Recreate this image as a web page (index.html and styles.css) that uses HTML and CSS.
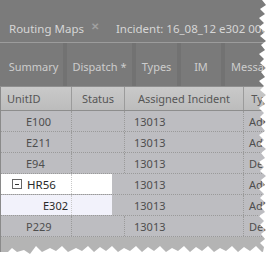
FILE: index.html
```html
<!DOCTYPE html>
<html lang="en">
<head>
  <meta charset="UTF-8" />
  <title>Routing Maps</title>
  <link rel="stylesheet" href="styles.css">
</head>
<body>
  <div class="page">
    <div class="titlebar">
      <span class="doc-tab">Routing Maps</span>
      <span class="close">&#x2715;</span>
      <span class="doc-tab">Incident: 16_08_12 e302 0001 1</span>
    </div>

    <div class="tabbar">
      <span class="tab t1">Summary</span>
      <span class="tab t2">Dispatch *</span>
      <span class="tab t3">Types</span>
      <span class="tab t4">IM</span>
      <span class="tab t5">Message</span>
    </div>

    <div class="grid-wrap">
      <div class="side"></div>
      <div class="grid">
        <div class="row head">
          <div class="cell c1">UnitID</div>
          <div class="cell c2">Status</div>
          <div class="cell c3">Assigned Incident</div>
          <div class="cell c4">Type</div>
        </div>
        <div class="row">
          <div class="cell c1 unit">E100</div>
          <div class="cell c2"></div>
          <div class="cell c3">13013</div>
          <div class="cell c4">Adhoc</div>
        </div>
        <div class="row">
          <div class="cell c1 unit">E211</div>
          <div class="cell c2"></div>
          <div class="cell c3">13013</div>
          <div class="cell c4">Ad-hoc</div>
        </div>
        <div class="row">
          <div class="cell c1 unit">E94</div>
          <div class="cell c2"></div>
          <div class="cell c3">13013</div>
          <div class="cell c4">Default</div>
        </div>
        <div class="row">
          <div class="cell c1 lit group"><span class="toggle"></span>HR56</div>
          <div class="cell c2 lit"></div>
          <div class="cell c3">13013</div>
          <div class="cell c4">Adhoc</div>
        </div>
        <div class="row">
          <div class="cell c1 lit sub">E302</div>
          <div class="cell c2 lit sub"></div>
          <div class="cell c3">13013</div>
          <div class="cell c4">Adhoc</div>
        </div>
        <div class="row">
          <div class="cell c1 unit">P229</div>
          <div class="cell c2"></div>
          <div class="cell c3">13013</div>
          <div class="cell c4">Default</div>
        </div>
      </div>
    </div>

    <svg class="torn" width="270" height="257" viewBox="0 0 270 257">
      <polygon fill="#fff" points="270,0 262,0 266,5 260,9 265,14 259,18 264,23 259,27 265,32 260,36 266,41 261,45 265,50 259,54 264,59 260,63 266,68 261,72 265,77 259,81 264,86 260,90 266,95 261,99 265,104 259,108 264,113 260,117 266,122 261,126 265,131 259,135 264,140 260,144 266,149 261,153 265,158 259,162 264,167 260,171 266,176 261,180 265,185 259,189 264,194 260,198 266,203 261,207 265,212 259,216 264,221 260,225 266,230 261,234 265,239 260,243 264,247 262,257 270,257"/>
      <polygon fill="#fff" points="0,257 0,252 8,252 12,248 17,252 24,250 30,254 36,246 42,252 50,248 56,251 62,246 68,252 76,248 82,251 88,246 94,252 100,247 106,251 112,246 118,252 124,248 130,251 136,246 142,252 148,247 154,251 160,246 166,252 172,248 178,251 184,246 190,252 196,247 202,251 208,246 214,252 220,248 226,251 232,246 238,252 244,247 250,251 256,246 262,252 270,250 270,257"/>
    </svg>
  </div>
</body>
</html>
```

FILE: styles.css
```css
body {
  margin: 0;
  background: #fff;
  font-family: "Noto Sans", "Open Sans", sans-serif;
}
.page {
  position: relative;
  width: 270px;
  height: 257px;
  overflow: hidden;
  background: #b4b4b4;
  display: flex;
  flex-direction: column;
}
.titlebar {
  height: 43px;
  flex: none;
  box-sizing: border-box;
  background: #7b7b7b;
  border-bottom: 1px solid #9c9c9c;
  display: flex;
  align-items: center;
  padding: 14px 0 0 9px;
  white-space: nowrap;
  color: #d6d6d6;
  font-size: 11.5px;
}
.close {
  color: #a0a0a0;
  font-size: 10px;
  font-weight: bold;
  margin: -4px 17px 0 7px;
}
.tabbar {
  height: 44px;
  flex: none;
  box-sizing: border-box;
  background: #727272;
  display: flex;
  gap: 4px;
  white-space: nowrap;
  border-bottom: 1px solid #8e8e8e;
}
.tab {
  color: #cdcdcd;
  font-size: 11px;
  display: flex;
  align-items: center;
  justify-content: center;
  padding-top: 4px;
  box-sizing: border-box;
  background: #7a7a7a;
  flex: none;
}
.t1 { width: 63px; padding-left: 4px; }
.t2 { width: 65px; }
.t3 { width: 41px; }
.t4 { width: 40px; }
.t5 { width: 60px; justify-content: flex-start; padding-left: 6px; }
.grid-wrap {
  flex: 1;
  display: flex;
}
.side {
  width: 3px;
  background: #5a5a5a;
  border-right: 1px solid #8a8a8a;
}
.grid {
  flex: 1;
  font-size: 11px;
  color: #4e4e4e;
}
.row {
  display: flex;
  height: 20px;
  border-bottom: 1px dotted #9a9a9a;
  background: #bdbdc1;
}
.row.head {
  height: 23px;
  background: linear-gradient(#c9c9c9, #bcbcbc);
  border-bottom: 1px solid #8d8d8d;
  color: #565656;
}
.cell {
  display: flex;
  align-items: center;
  box-sizing: border-box;
  border-right: 1px dotted #9a9a9a;
  overflow: hidden;
  white-space: nowrap;
}
.head .cell {
  border-right: 1px solid #9b9b9b;
  justify-content: center;
}
.head .c1 {
  justify-content: flex-start;
  padding-left: 6px;
}
.c1 { width: 71px; }
.c2 { width: 53px; }
.c3 { width: 119px; padding-left: 9px; }
.c4 { width: 40px; padding-left: 5px; }
.head .c3, .head .c4 { padding-left: 0; }
.unit { padding-left: 25px; }
.lit {
  background: #fff;
  color: #2a2a2a;
  border-right: 1px dotted #c8c8c8;
}
.c2.lit {
  width: 40px;
  border-right: none;
  margin-right: 13px;
}
.sub { background: #f2f2fb; }
.lit.sub.c1 { justify-content: flex-end; padding-right: 3px; }
.group { padding-left: 11px; font-size: 11.5px; }
.toggle {
  position: relative;
  width: 8px;
  height: 8px;
  border: 1px solid #666;
  margin-right: 5px;
}
.toggle::after {
  content: "";
  position: absolute;
  left: 2px;
  top: 3.5px;
  width: 4px;
  height: 1px;
  background: #333;
}
.torn {
  position: absolute;
  left: 0;
  top: 0;
}
```
